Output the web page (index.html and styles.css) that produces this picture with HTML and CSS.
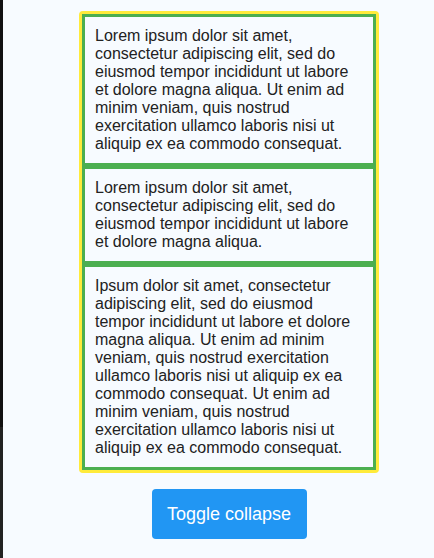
FILE: index.html
```html
<!DOCTYPE html>
<html lang="en">
<head>
<meta charset="utf-8">
<title>Collapse</title>
<link rel="stylesheet" href="styles.css">
</head>
<body>
<div class="page">
  <div class="edge"><div class="edge-top"></div><div class="edge-bottom"></div></div>
  <main class="main">
    <div class="stack">
      <div class="item">Lorem ipsum dolor sit amet, consectetur adipiscing elit, sed do eiusmod tempor incididunt ut labore et dolore magna aliqua. Ut enim ad minim veniam, quis nostrud exercitation ullamco laboris nisi ut aliquip ex ea commodo consequat.</div>
      <div class="item">Lorem ipsum dolor sit amet, consectetur adipiscing elit, sed do eiusmod tempor incididunt ut labore et dolore magna aliqua.</div>
      <div class="item">Ipsum dolor sit amet, consectetur adipiscing elit, sed do eiusmod tempor incididunt ut labore et dolore magna aliqua. Ut enim ad minim veniam, quis nostrud exercitation ullamco laboris nisi ut aliquip ex ea commodo consequat. Ut enim ad minim veniam, quis nostrud exercitation ullamco laboris nisi ut aliquip ex ea commodo consequat.</div>
    </div>
    <button class="toggle" type="button">Toggle collapse</button>
  </main>
</div>
</body>
</html>
```

FILE: styles.css
```css
html, body {
  margin: 0;
  padding: 0;
  height: 100%;
}
body {
  background: #f7fbff;
  font-family: "Liberation Sans", Arial, sans-serif;
  color: #222;
}
.page {
  display: flex;
  min-height: 558px;
}
.edge {
  width: 3px;
  display: flex;
  flex-direction: column;
  flex-shrink: 0;
}
.edge-top {
  height: 427px;
  background: #111;
}
.edge-bottom {
  flex: 1;
  background: #222;
}
.main {
  flex: 1;
  display: flex;
  flex-direction: column;
  align-items: center;
  padding: 11px 0 0 21px;
  gap: 16px;
}
.stack {
  width: 294px;
  border: 3px solid #ffeb3b;
  border-radius: 4px;
  display: flex;
  flex-direction: column;
}
.item {
  border: 3px solid #4caf50;
  padding: 10px;
  font-size: 16px;
  line-height: 18px;
}
.toggle {
  background: #2196f3;
  color: #fff;
  border: none;
  border-radius: 4px;
  font-family: "Liberation Sans", Arial, sans-serif;
  font-size: 18px;
  line-height: 20px;
  padding: 15px 14px;
  width: 155px;
  cursor: pointer;
}
```
